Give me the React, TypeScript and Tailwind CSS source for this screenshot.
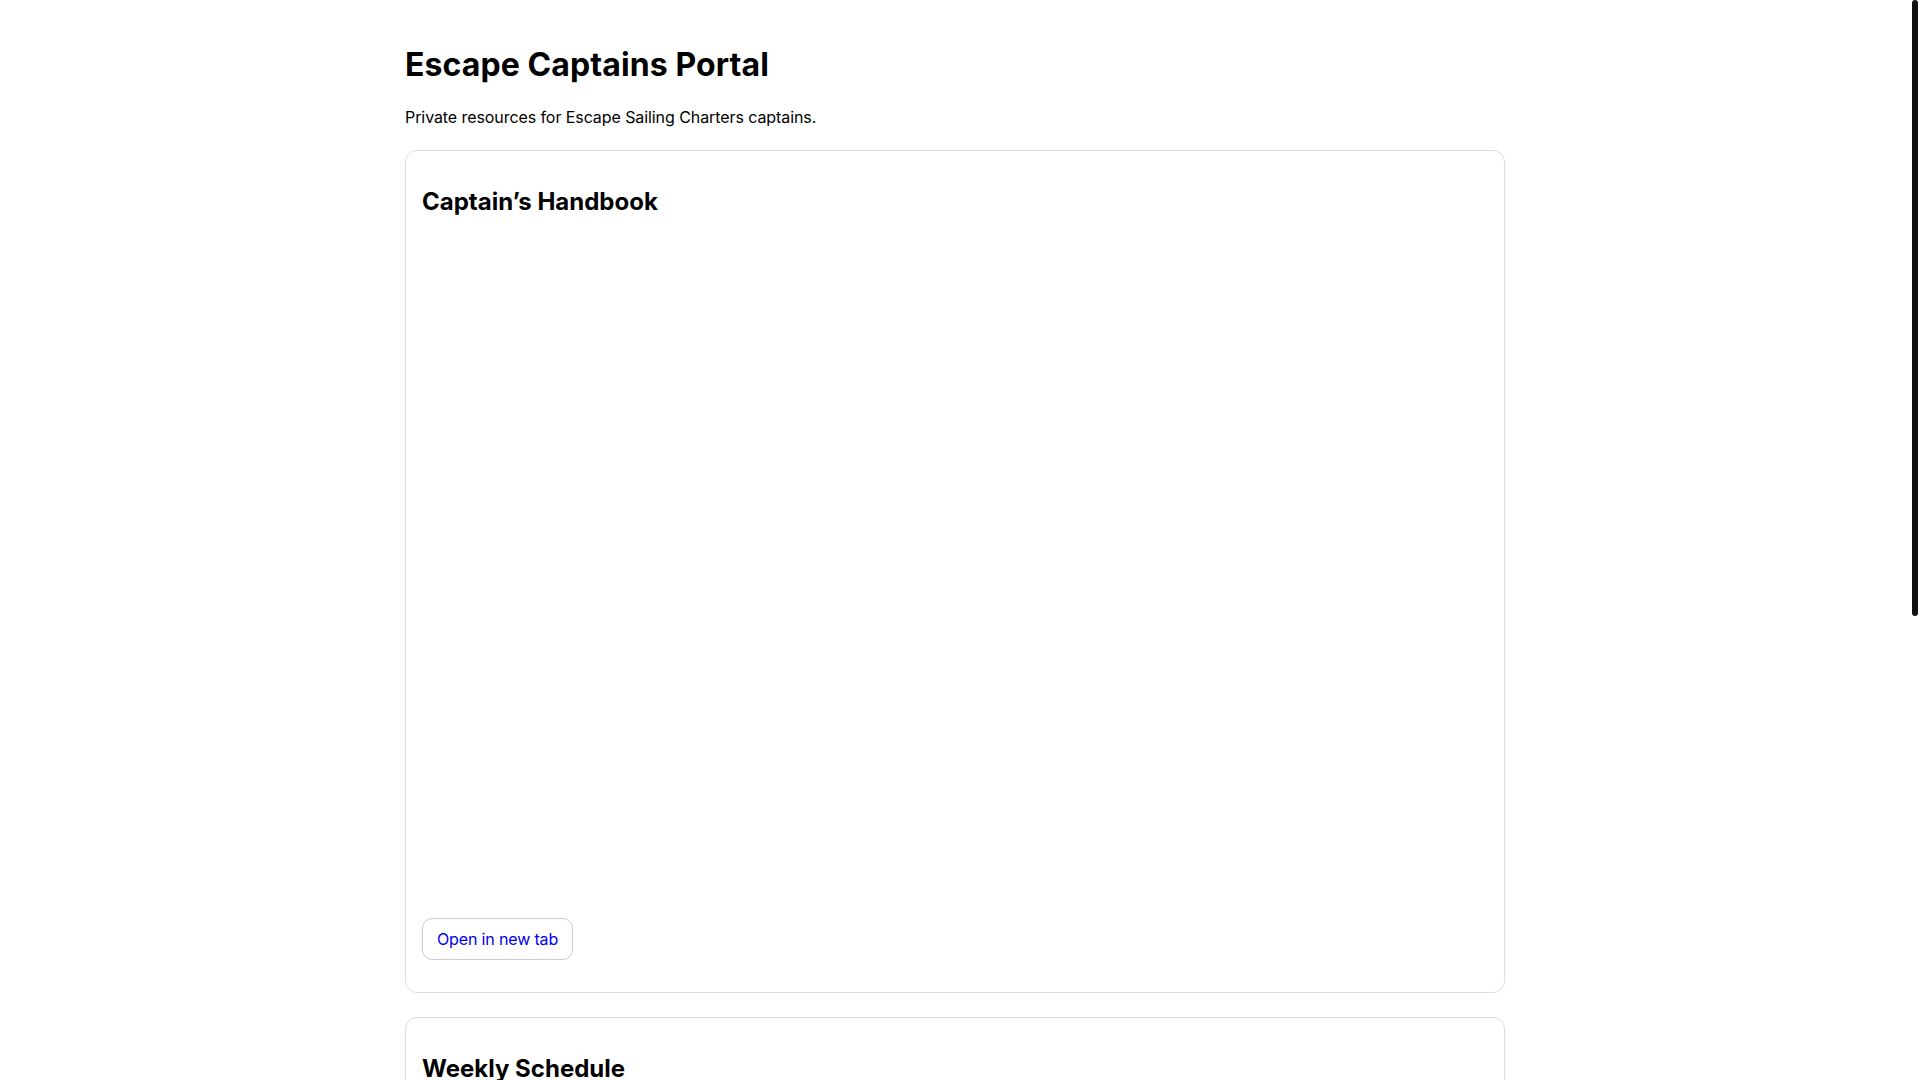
import React from "react";

function ResourceCard({ title }: { title: string }) {
  return (
    <section className="rounded-xl border border-[#dddddd] bg-white p-4">
      <h2 className="mt-5 mb-5 text-2xl font-bold leading-[29px] text-black">{title}</h2>
      <div className="h-[666px] w-full bg-white" />
      <p className="mt-4 mb-4">
        <a
          href="#"
          className="inline-block rounded-[10px] border border-[#cccccc] bg-white px-[14px] py-2 text-base leading-6 tracking-[-0.15px] text-[#0000ee] no-underline"
        >
          Open in new tab
        </a>
      </p>
    </section>
  );
}

export default function App() {
  return (
    <div
      className="relative min-h-screen w-full bg-white pr-[10px] text-black"
      style={{ fontFamily: "Inter, 'Noto Sans', sans-serif" }}
    >
      <main className="mx-auto max-w-[1100px] pt-[45px] pb-8">
        <h1 className="text-[32px] font-bold leading-[39px] tracking-[0.1px]">Escape Captains Portal</h1>
        <p className="mt-[21px] text-base leading-6 tracking-[-0.08px]">
          Private resources for Escape Sailing Charters captains.
        </p>
        <div className="mt-[21px] flex flex-col gap-6">
          <ResourceCard title="Captain’s Handbook" />
          <ResourceCard title="Weekly Schedule" />
        </div>
      </main>
      <div className="fixed top-0 right-[2px] h-[616px] w-[6px] rounded-[3px] bg-[#111111]" />
    </div>
  );
}
